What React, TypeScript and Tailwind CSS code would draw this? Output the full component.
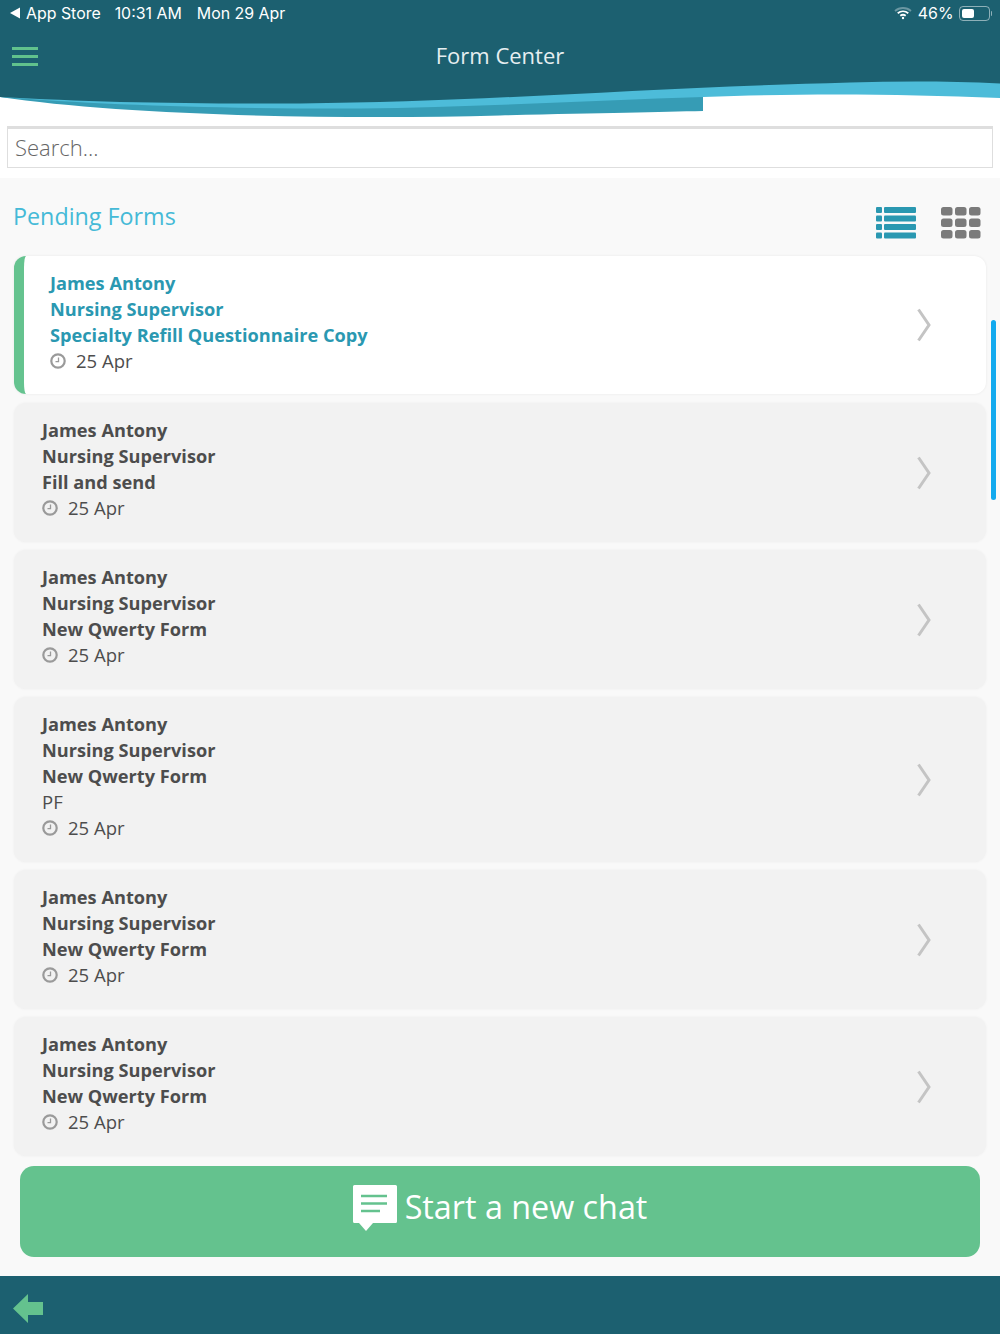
const forms = [
  { title: 'Fill and send' },
  { title: 'New Qwerty Form' },
  { title: 'New Qwerty Form', note: 'PF' },
  { title: 'New Qwerty Form' },
  { title: 'New Qwerty Form' },
]

const Clock = () => (
  <svg width="16" height="16" viewBox="0 0 16 16" fill="none" stroke="#9a9a9a" className="shrink-0">
    <circle cx="8" cy="8" r="6.700" strokeWidth="2.200" />
    <path d="M8.500 4.500V8.600H5.500" strokeWidth="1.300" />
  </svg>
)

const Chevron = () => (
  <svg width="16" height="36" viewBox="0 0 16 36" fill="none" stroke="#c4c4c4" strokeWidth="3" className="shrink-0">
    <path d="M2.500 2.500 13 18 2.500 33.500" />
  </svg>
)

const ListIcon = () => (
  <svg width="40" height="32" viewBox="0 0 40 32" fill="#2a98b1">
    <rect x="0" y="0" width="6" height="6" rx="1" />
    <rect x="8" y="0" width="32" height="6" rx="1" />
    <rect x="0" y="8.500" width="6" height="6" rx="1" />
    <rect x="8" y="8.500" width="32" height="6" rx="1" />
    <rect x="0" y="17" width="6" height="6" rx="1" />
    <rect x="8" y="17" width="32" height="6" rx="1" />
    <rect x="0" y="25.500" width="6" height="6" rx="1" />
    <rect x="8" y="25.500" width="32" height="6" rx="1" />
  </svg>
)

const GridIcon = () => (
  <svg width="40" height="32" viewBox="0 0 40 32" fill="#7b7b7b">
    {[0, 11.500, 23].map((y) =>
      [0, 14, 28].map((x) => <rect key={`${x}-${y}`} x={x} y={y} width="11.500" height="8.500" rx="2.500" />),
    )}
  </svg>
)

const Wifi = () => (
  <svg width="18" height="14" viewBox="0 0 18 14" fill="none" stroke="#fff" className="shrink-0">
    <path d="M1 5C5.500 1 12.500 1 17 5" strokeWidth="1.800" opacity="0.35" />
    <path d="M3.700 7.300C6.800 4.800 11.200 4.800 14.300 7.300" strokeWidth="1.800" />
    <path d="M6.300 9.800C8 8.500 10 8.500 11.700 9.800" strokeWidth="1.800" />
    <circle cx="9" cy="12" r="1.200" fill="#fff" stroke="none" />
  </svg>
)

const Battery = () => (
  <div className="flex items-center">
    <div className="flex h-[15px] w-[31px] items-center rounded-[4px] border border-white/50 p-[2px]">
      <div className="h-full w-[12px] rounded-[2px] bg-white" />
    </div>
    <div className="ml-px h-[5px] w-[1.500px] rounded-r bg-white/50" />
  </div>
)

const Wave = () => (
  <svg width="1000" height="40" viewBox="0 0 1000 40" className="block bg-white" preserveAspectRatio="none">
    <rect width="1000" height="40" fill="#fff" />
    <path d="M0 17C120 35 330 40 500 35.500C600 33 660 32 703 31V10H0Z" fill="#369cb5" />
    <path d="M0 17C100 25 230 29 360 28.500C480 27 600 20 703 17C810 13 900 14 1000 18V0H0Z" fill="#4dbcd9" />
    <path d="M0 0V17C90 22 180 24 300 23.500C480 22 640 8 850 2.500C900 1 950 1 1000 3.500V0Z" fill="#1c6070" />
  </svg>
)

const App = () => {
  return (
    <div className="relative flex h-[1334px] w-[1000px] flex-col overflow-hidden bg-[#f9f9f9] font-['Open_Sans',sans-serif] text-[#4d4d4d]">
      <header className="bg-[#1c6070]">
        <div className="flex h-[26px] items-center justify-between pl-[9px] pr-[8px] pt-[1px] font-['Inter',sans-serif] text-[15.900px] text-white">
          <div className="flex items-center">
            <svg width="12" height="12" viewBox="0 0 12 12" fill="#fff" className="mr-[5px]">
              <path d="M11 .5V11.500L1 6Z" />
            </svg>
            <span>App Store</span>
            <span className="ml-[14px]">10:31 AM</span>
            <span className="ml-[15px]">Mon 29 Apr</span>
          </div>
          <div className="flex items-center">
            <Wifi />
            <span className="ml-[6px] mr-[5px]">46%</span>
            <Battery />
          </div>
        </div>
        <div className="relative flex h-[54px] items-center justify-center pt-[4px]">
          <div className="absolute left-[12px] top-[21px] flex w-[26px] flex-col gap-[5.500px]">
            <div className="h-[2.500px] bg-[#61c28d]" />
            <div className="h-[2.500px] bg-[#61c28d]" />
            <div className="h-[2.500px] bg-[#61c28d]" />
          </div>
          <h1 className="text-[22px] font-normal text-[#e6eef0]">Form Center</h1>
        </div>
      </header>
      <Wave />

      <div className="h-[58px] bg-white px-[7px] pt-[6px]">
        <input
          readOnly
          placeholder="Search..."
          className="h-[42px] w-full border border-t-[3px] border-[#dedede] bg-white px-[7px] pb-[3px] text-[22px] font-light outline-none placeholder:text-[#666]"
        />
      </div>

      <main className="flex flex-1 flex-col px-[14px]">
        <div className="flex h-[78px] items-start justify-between pr-[5px]">
          <h2 className="-ml-px mt-[21px] text-[23.300px] font-normal leading-[34px] text-[#45bad7]">Pending Forms</h2>
          <div className="mt-[29px] flex gap-[25px]">
            <ListIcon />
            <GridIcon />
          </div>
        </div>

        <div className="flex flex-col gap-[8px]">
          <article className="mb-px flex items-center justify-between rounded-[12px] border-l-[10px] border-[#65c38f] bg-white pl-[26px] pr-[54px] shadow-[0_0_3px_rgba(0,0,0,0.07)]">
            <div className="pb-[20px] pt-[14px] text-[18.500px] leading-[26px]">
              <p className="text-[18.200px] font-bold text-[#2a98b1]">James Antony</p>
              <p className="text-[18.200px] font-bold text-[#2a98b1]">Nursing Supervisor</p>
              <p className="text-[18.200px] font-bold text-[#2a98b1]">Specialty Refill Questionnaire Copy</p>
              <p className="flex items-center gap-[10px]">
                <Clock />
                25 Apr
              </p>
            </div>
            <Chevron />
          </article>

          {forms.map((form, index) => (
            <article
              key={index}
              className="flex items-center justify-between rounded-[12px] bg-[#f2f2f2] pl-[28px] pr-[54px] shadow-[0_0_3px_rgba(0,0,0,0.05)]"
            >
              <div className="pb-[21px] pt-[14px] text-[18.500px] leading-[26px]">
                <p className="text-[18.200px] font-bold">James Antony</p>
                <p className="text-[18.200px] font-bold">Nursing Supervisor</p>
                <p className="text-[18.200px] font-bold">{form.title}</p>
                {form.note && <p>{form.note}</p>}
                <p className="flex items-center gap-[10px]">
                  <Clock />
                  25 Apr
                </p>
              </div>
              <Chevron />
            </article>
          ))}
        </div>

        <button className="mx-[6px] mt-[10px] flex h-[91px] items-center justify-center gap-[8px] rounded-[14px] bg-[#64c28e] pb-[10px] text-[32.300px] text-white">
          <svg width="44" height="46" viewBox="0 0 44 46" className="mt-[2px] shrink-0">
            <path d="M1.500 0H42.500A1.500 1.500 0 0 1 44 1.500V36.500A1.500 1.500 0 0 1 42.500 38H20L13 46L6 38H1.500A1.500 1.500 0 0 1 0 36.500V1.500A1.500 1.500 0 0 1 1.500 0Z" fill="#fff" />
            <path d="M8 11H34M8 18.500H34M8 26H27" stroke="#64c28e" strokeWidth="2.500" />
          </svg>
          Start a new chat
        </button>
      </main>

      <footer className="flex h-[58px] items-center bg-[#1c6070] pl-[13px] pt-[7px]">
        <svg width="30" height="29" viewBox="0 0 30 29" fill="#64c28e">
          <path d="M0 14.500 15 0V8H30V21H15V29Z" />
        </svg>
      </footer>

      <div className="absolute left-[991px] top-[320px] h-[180px] w-[5px] rounded-full bg-[#12a9ee]" />
    </div>
  )
}

export default App
